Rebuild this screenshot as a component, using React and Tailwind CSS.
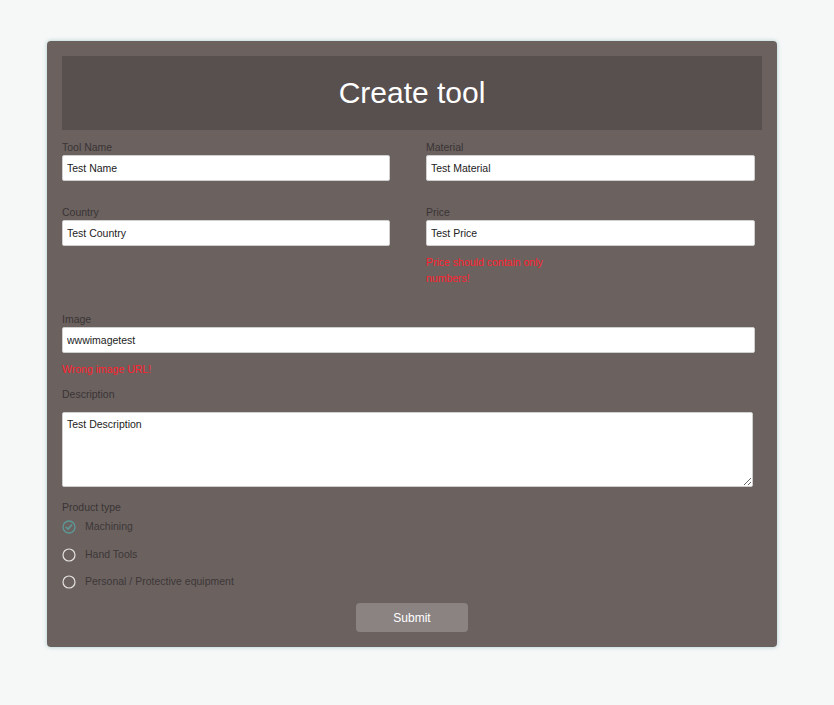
import { useState } from "react";

const font = { fontFamily: '"Liberation Sans", Arial, sans-serif' };

const labelCls = "block text-[10.5px] leading-[13px] text-[#3a3434] mb-[1px]";
const inputCls =
  "block w-full h-[26px] bg-white border border-[#cfcfcf] rounded-[2px] px-[4px] text-[10.5px] text-[#222] focus:outline-none";
const errCls = "text-[10.5px] leading-[16px] text-[#ff1f2d] font-medium";

function Field({ label, value, onChange }) {
  return (
    <div>
      <label className={labelCls}>{label}</label>
      <input className={inputCls} value={value} onChange={e => onChange(e.target.value)} />
    </div>
  );
}

function Radio({ checked, label, onClick }) {
  return (
    <button type="button" onClick={onClick} className="flex items-center h-[14px] text-left">
      {checked ? (
        <svg width="14" height="14" viewBox="0 0 14 14" className="shrink-0">
          <circle cx="7" cy="7" r="6" fill="none" stroke="#5d9896" strokeWidth="1.3" />
          <path d="M4.3 7.4 L6.1 9.1 L9.6 4.9" fill="none" stroke="#5d9896" strokeWidth="1.6" strokeLinecap="round" />
        </svg>
      ) : (
        <svg width="14" height="14" viewBox="0 0 14 14" className="shrink-0">
          <circle cx="7" cy="7" r="6" fill="none" stroke="#e4e1e0" strokeWidth="1.2" />
        </svg>
      )}
      <span className="ml-[9px] text-[10.5px] text-[#3d3737]">{label}</span>
    </button>
  );
}

export default function App() {
  const [form, setForm] = useState({
    name: "Test Name",
    material: "Test Material",
    country: "Test Country",
    price: "Test Price",
    image: "wwwimagetest",
    description: "Test Description",
  });
  const [type, setType] = useState("machining");

  const set = key => v => setForm({ ...form, [key]: v });

  return (
    <div className="min-h-[705px] bg-[#f5f8f7] pt-[41px] pb-[59px]" style={font}>
      <div className="ml-[47px] w-[730px] bg-[#6b6260] rounded-[4px] px-[15px] pt-[15px] pb-[15px] shadow-[0_0_4px_rgba(110,170,170,0.55)]">
        {/* header */}
        <div className="h-[74px] bg-[#584f4f] flex items-center justify-center">
          <h1 className="text-[30px] text-white leading-none">Create tool</h1>
        </div>

        {/* two column rows */}
        <div className="mt-[11px] grid grid-cols-[328px_329px] gap-x-[36px] gap-y-[25px] w-[693px]">
          <Field label="Tool Name" value={form.name} onChange={set("name")} />
          <Field label="Material" value={form.material} onChange={set("material")} />
          <Field label="Country" value={form.country} onChange={set("country")} />
          <div>
            <Field label="Price" value={form.price} onChange={set("price")} />
            <p className={`${errCls} mt-[8px] w-[130px]`}>Price should contain only numbers!</p>
          </div>
        </div>

        <div className="mt-[27px] w-[693px]">
          <Field label="Image" value={form.image} onChange={set("image")} />
          <p className={`${errCls} mt-[8px]`}>Wrong image URL!</p>
        </div>

        <div className="mt-[11px]">
          <label className={labelCls + " mb-[11px]"}>Description</label>
          <textarea
            className="block w-[691px] h-[75px] bg-white border border-[#cfcfcf] rounded-[2px] px-[4px] pt-[5px] text-[10.5px] leading-[13px] text-[#222] focus:outline-none"
            value={form.description}
            onChange={e => set("description")(e.target.value)}
          />
        </div>

        <div className="mt-[14px]">
          <label className={labelCls}>Product type</label>
          <div className="mt-[6px] flex flex-col gap-[13.5px] items-start">
            {[
              ["machining", "Machining"],
              ["hand", "Hand Tools"],
              ["ppe", "Personal / Protective equipment"],
            ].map(([k, l]) => (
              <Radio key={k} checked={type === k} label={l} onClick={() => setType(k)} />
            ))}
          </div>
        </div>

        <div className="mt-[14px] flex justify-center">
          <button className="w-[112px] h-[29px] bg-[#8a8382] rounded-[4px] text-white text-[12px]">
            Submit
          </button>
        </div>
      </div>
    </div>
  );
}
